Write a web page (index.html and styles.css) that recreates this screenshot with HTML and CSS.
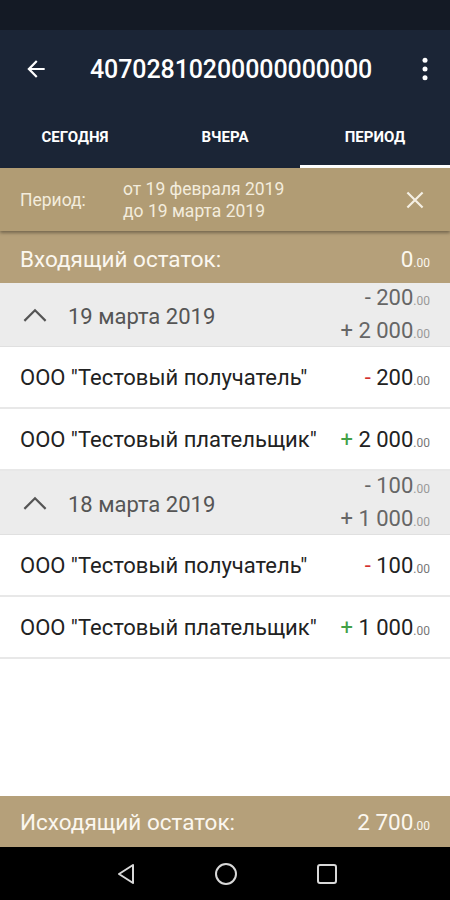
FILE: index.html
```html
<!DOCTYPE html>
<html lang="ru">
<head>
<meta charset="utf-8">
<link rel="stylesheet" href="styles.css">
</head>
<body>
<div class="screen">
  <div class="statusbar"></div>
  <header class="toolbar">
    <svg class="icon back" viewBox="0 0 24 24" width="26" height="26"><path d="M20 11H7.83l5.59-5.59L12 4l-8 8 8 8 1.41-1.41L7.83 13H20v-2z" fill="#fff"/></svg>
    <h1 class="title">40702810200000000000</h1>
    <svg class="icon more" viewBox="0 0 24 24" width="30" height="30"><circle cx="12" cy="5" r="2" fill="#fff"/><circle cx="12" cy="12" r="2" fill="#fff"/><circle cx="12" cy="19" r="2" fill="#fff"/></svg>
  </header>
  <nav class="tabs">
    <div class="tab">СЕГОДНЯ</div>
    <div class="tab">ВЧЕРА</div>
    <div class="tab active">ПЕРИОД</div>
  </nav>
  <div class="period">
    <span class="period-label">Период:</span>
    <div class="period-dates">
      <div>от 19 февраля 2019</div>
      <div>до 19 марта 2019</div>
    </div>
    <svg class="close" viewBox="0 0 24 24" width="26" height="26"><path d="M5 5L19 19M19 5L5 19" stroke="#f4efe4" stroke-width="2" fill="none"/></svg>
  </div>
  <div class="balance">
    <span>Входящий остаток:</span>
    <span class="amt">0<small>.00</small></span>
  </div>
  <main class="list">
    <div class="group">
      <svg class="chev" viewBox="0 0 24 16" width="26" height="17"><path d="M2 14L12 4l10 10" stroke="#555" stroke-width="2" fill="none"/></svg>
      <span class="gdate">19 марта 2019</span>
      <div class="gsum">
        <div>- 200<small>.00</small></div>
        <div>+ 2 000<small>.00</small></div>
      </div>
    </div>
    <div class="row"><span class="name">ООО "Тестовый получатель"</span><span class="amt"><b class="minus">-</b> 200<small>.00</small></span></div>
    <div class="row"><span class="name">ООО "Тестовый плательщик"</span><span class="amt"><b class="plus">+</b> 2 000<small>.00</small></span></div>
    <div class="group">
      <svg class="chev" viewBox="0 0 24 16" width="26" height="17"><path d="M2 14L12 4l10 10" stroke="#555" stroke-width="2" fill="none"/></svg>
      <span class="gdate">18 марта 2019</span>
      <div class="gsum">
        <div>- 100<small>.00</small></div>
        <div>+ 1 000<small>.00</small></div>
      </div>
    </div>
    <div class="row"><span class="name">ООО "Тестовый получатель"</span><span class="amt"><b class="minus">-</b> 100<small>.00</small></span></div>
    <div class="row"><span class="name">ООО "Тестовый плательщик"</span><span class="amt"><b class="plus">+</b> 1 000<small>.00</small></span></div>
  </main>
  <div class="balance total">
    <span>Исходящий остаток:</span>
    <span class="amt">2 700<small>.00</small></span>
  </div>
  <div class="navbar">
    <svg viewBox="0 0 20 22" width="20" height="22"><path d="M17 2L3 11l14 9z" stroke="#d8d8d8" stroke-width="2" fill="none" stroke-linejoin="round"/></svg>
    <svg viewBox="0 0 24 24" width="24" height="24"><circle cx="12" cy="12" r="10" stroke="#d8d8d8" stroke-width="2" fill="none"/></svg>
    <svg viewBox="0 0 22 22" width="22" height="22"><rect x="2" y="2" width="18" height="18" rx="2" stroke="#d8d8d8" stroke-width="2" fill="none"/></svg>
  </div>
</div>
</body>
</html>
```
FILE: styles.css
```css
* { box-sizing: border-box; }
html, body { margin: 0; padding: 0; }
body { font-family: Roboto, "Noto Sans", sans-serif; background: #fff; }
.screen { width: 450px; height: 900px; display: flex; flex-direction: column; overflow: hidden; }
.statusbar { height: 30px; background: #141a25; flex: none; }
.toolbar { height: 78px; background: #1b2536; display: flex; align-items: center; padding: 0 0 0 23px; flex: none; }
.icon.back { flex: none; }
.title { margin: 0 0 0 41px; font-size: 25px; font-weight: 500; color: #fff; letter-spacing: -0.1px; flex: 1; }
.icon.more { margin-right: 10px; flex: none; }
.tabs { height: 60px; background: #1b2536; display: flex; flex: none; }
.tab { flex: 1; display: flex; align-items: center; justify-content: center; color: #fff; font-size: 15px; font-weight: 700; padding-top: 0; border-bottom: 3px solid transparent; }
.tab.active { border-bottom-color: #fff; }
.period { height: 63px; background: #b19c74; display: flex; align-items: center; padding: 0 20px; position: relative; z-index: 2; box-shadow: 0 2px 3px rgba(0,0,0,0.35); flex: none; color: #f3ecdd; font-size: 17.5px; }
.period-label { width: 103px; }
.period-dates { flex: 1; line-height: 22px; }
.close { margin-right: 2px; }
.balance { height: 52px; background: #b5a07a; display: flex; align-items: center; justify-content: space-between; padding: 3px 20px 0 20px; color: #fbf7ef; font-size: 22.5px; flex: none; }
.balance .amt small { font-size: 12px; }
.list { flex: 1; }
.group { height: 64px; background: #ececec; display: flex; align-items: center; padding: 3px 20px 0 22px; border-bottom: 1px solid #e0e0e0; }
.chev { flex: none; margin-top: -3px; }
.gdate { margin-left: 20px; flex: 1; font-size: 22px; color: #555; }
.gsum { text-align: right; font-size: 22px; color: #666; line-height: 30px; }
.gsum small { font-size: 12px; color: #999; }
.row { height: 62px; display: flex; align-items: center; justify-content: space-between; padding: 0 20px; border-bottom: 2px solid #e8e8e8; font-size: 22px; color: #222; }
.row .amt small { font-size: 12px; color: #777; }
.minus { color: #d32f2f; font-weight: 400; }
.plus { color: #43a047; font-weight: 400; }
.total { height: 51px; padding-top: 0; }
.navbar { height: 53px; background: #000; display: flex; align-items: center; justify-content: center; gap: 78px; flex: none; padding-left: 4px; }
```
